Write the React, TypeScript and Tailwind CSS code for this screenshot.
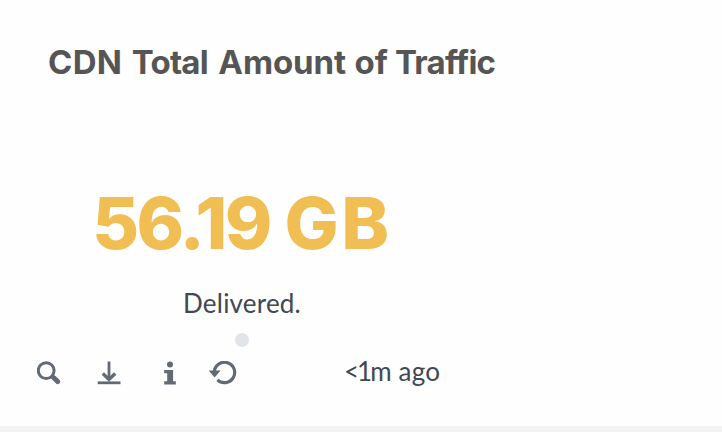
function SearchIcon() {
  return (
    <svg width="24" height="24" viewBox="0 0 24 24" fill="none" stroke="#626a76">
      <circle cx="9.2" cy="9.6" r="7.9" strokeWidth="3" />
      <path d="M14.5 14.7l2 2" strokeWidth="3.6" />
      <path d="M16.8 16.8l3.8 3.7" strokeWidth="5" strokeLinecap="round" />
    </svg>
  );
}

function DownloadIcon() {
  return (
    <svg width="24" height="24" viewBox="0 0 24 24" fill="none" stroke="#626a76">
      <path d="M12 0.5v17" strokeWidth="2.8" />
      <path d="M5.8 12.6l6.2 5.9 6.2-5.9" strokeWidth="3.4" />
      <path d="M0.7 21.8h22.8" strokeWidth="2.8" />
    </svg>
  );
}

function InfoIcon() {
  return (
    <svg width="12" height="24" viewBox="0 0 12 24" fill="#626a76">
      <circle cx="6" cy="3.4" r="3" />
      <path d="M0.2 9h8.9v11.2h2.7v3.2H0.2v-3.2h3v-8h-3z" />
    </svg>
  );
}

function RefreshIcon() {
  return (
    <svg width="28" height="24" viewBox="0 0 28 24" fill="none">
      <path d="M5.3 10.8A10.2 10.2 0 1 1 8.4 18.8" stroke="#626a76" strokeWidth="3.2" />
      <path d="M-0.4 9.5h12L5.6 16.6z" fill="#626a76" />
    </svg>
  );
}

export default function App() {
  return (
    <main className="flex h-[432px] w-[722px] flex-col overflow-hidden bg-[#fefefe] font-['Inter',sans-serif]">
      <h1 className="ml-12 mt-[42px] flex h-10 items-center gap-[9.5px] whitespace-nowrap text-[33px] font-bold leading-10 text-[#555555]">
        <span className="tracking-[0.3px]">CDN</span>
        <span className="tracking-[-0.8px]">Total</span>
        <span className="ml-px tracking-[-0.1px]">Amount</span>
        <span className="-ml-px tracking-[0.1px]">of</span>
        <span className="-ml-[2.5px] tracking-[-0.8px]">Traffic</span>
      </h1>
      <section className="flex h-[268px] w-[484px] flex-col items-center">
        <p className="mt-[101px] flex h-20 gap-[15px] whitespace-nowrap text-[72px] font-extrabold leading-[80px] text-[#f0be52]">
          <span className="tracking-[-2.7px]">56.19</span>
          <span className="tracking-[2.5px]">GB</span>
        </p>
        <p className="mt-6 h-8 whitespace-nowrap font-['Lato',sans-serif] text-[26px] leading-8 tracking-[0.2px] text-[#414753]">
          Delivered.
        </p>
        <span className="mt-[14px] size-[14px] rounded-full bg-[#e1e4e8]" />
      </section>
      <footer className="flex h-[76px] items-start pl-[37px] pt-[11px]">
        <div className="flex w-[307px] shrink-0 items-center">
          <button aria-label="Search"><SearchIcon /></button>
          <button aria-label="Download" className="ml-9"><DownloadIcon /></button>
          <button aria-label="Information" className="ml-[43px]"><InfoIcon /></button>
          <button aria-label="Refresh" className="ml-[33px]"><RefreshIcon /></button>
        </div>
        <p className="-mt-1.5 flex gap-[9px] whitespace-nowrap font-['Lato',sans-serif] text-[26px] leading-8 text-[#414753]">
          <span className="tracking-[-2px]">&lt;1m</span>
          <span className="tracking-[0.2px]">ago</span>
        </p>
      </footer>
      <div className="h-1.5 bg-[#f2f3f5]" />
    </main>
  );
}
